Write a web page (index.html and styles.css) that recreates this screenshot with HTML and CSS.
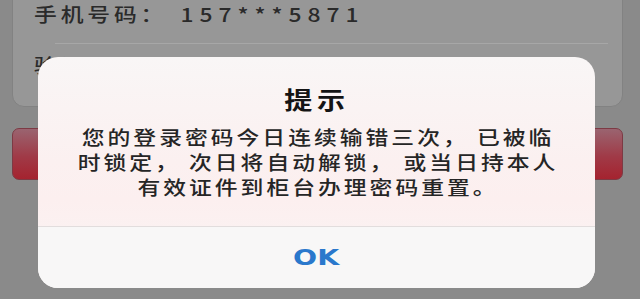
FILE: index.html
```html
<!DOCTYPE html>
<html lang="zh-CN">
<head>
<meta charset="utf-8">
<title>提示</title>
<link rel="stylesheet" href="styles.css">
</head>
<body>
<div class="screen">
  <div class="card">
    <div class="row row-phone"><span class="stretch-left">手机号码：<span class="digits">157***5871</span></span></div>
    <div class="sep"></div>
    <div class="row row-code"><span class="stretch-left">验证码</span></div>
  </div>
  <div class="btn"></div>

  <div class="dialog" role="alertdialog">
    <div class="dlg-body">
      <div class="title"><span class="title-text">提示</span></div>
      <div class="msg"><span class="msg-text">您的登录密码今日连续输错三次， 已被临<br>时锁定， 次日将自动解锁， 或当日持本人<br>有效证件到柜台办理密码重置。</span></div>
    </div>
    <div class="divider"></div>
    <div class="actions"><span class="ok">OK</span></div>
  </div>
</div>
</body>
</html>
```
FILE: styles.css
```css
html, body {
  margin: 0;
  padding: 0;
  width: 640px;
  height: 299px;
  overflow: hidden;
  background: #8a8a8a;
}

.screen {
  position: relative;
  width: 640px;
  height: 299px;
  overflow: hidden;
  font-family: "Noto Sans CJK SC", "Noto Sans", sans-serif;
}

.card {
  margin: -30px 17px 0 12px;
  height: 137px;
  box-sizing: border-box;
  padding-top: 29px;
  background: #979797;
  border: 1px solid #828282;
  border-radius: 12px;
}

.row {
  padding-left: 21px;
  font-size: 19px;
  font-weight: 500;
  line-height: 28px;
  letter-spacing: 3.2px;
  color: #2a2a2a;
  white-space: nowrap;
}

.stretch-left {
  display: inline-block;
  transform: scaleX(1.2);
  transform-origin: left center;
}

.digits {
  margin-left: 11px;
  letter-spacing: 5px;
}

.row-phone {
  height: 43px;
}

.sep {
  height: 1px;
  margin: 0 14px 0 42px;
  background: #a7a7a7;
}

.row-code {
  padding-top: 7px;
}

.btn {
  margin: 21px 17px 0 12px;
  height: 52px;
  box-sizing: border-box;
  border-radius: 7px;
  border: 1px solid #7d3a44;
  background: linear-gradient(to bottom, #9a6470 0%, #a03a47 55%, #a5232f 100%);
}

.dialog {
  position: absolute;
  left: 38px;
  top: 57px;
  width: 557px;
  height: 231px;
  border-radius: 20px;
  overflow: hidden;
  display: flex;
  flex-direction: column;
  background: linear-gradient(to bottom, #f9f6f6 0%, #fbf0f0 45%, #fcefef 62%, #f9f5f5 100%);
}

.dlg-body {
  height: 169px;
  box-sizing: border-box;
  padding-top: 27px;
  text-align: center;
}

.title {
  font-size: 24px;
  font-weight: 700;
  line-height: 30px;
  color: #141414;
}

.title-text {
  display: inline-block;
  letter-spacing: 4px;
  transform: scaleX(1.17);
}

.msg {
  margin-top: 10px;
  font-size: 19px;
  font-weight: 500;
  line-height: 25px;
  color: #252525;
  white-space: nowrap;
}

.msg-text {
  display: inline-block;
  padding-left: 2.5px;
  letter-spacing: 2.5px;
  transform: scaleX(1.2);
}

.divider {
  height: 1px;
  background: #e2dddd;
}

.actions {
  flex: 1;
  display: flex;
  align-items: center;
  justify-content: center;
  background: #f8f7f7;
}

.ok {
  display: inline-block;
  font-family: "DejaVu Sans", sans-serif;
  font-weight: 700;
  font-size: 21px;
  line-height: 24px;
  color: #2a78cc;
  transform: scaleX(1.35);
}
```
